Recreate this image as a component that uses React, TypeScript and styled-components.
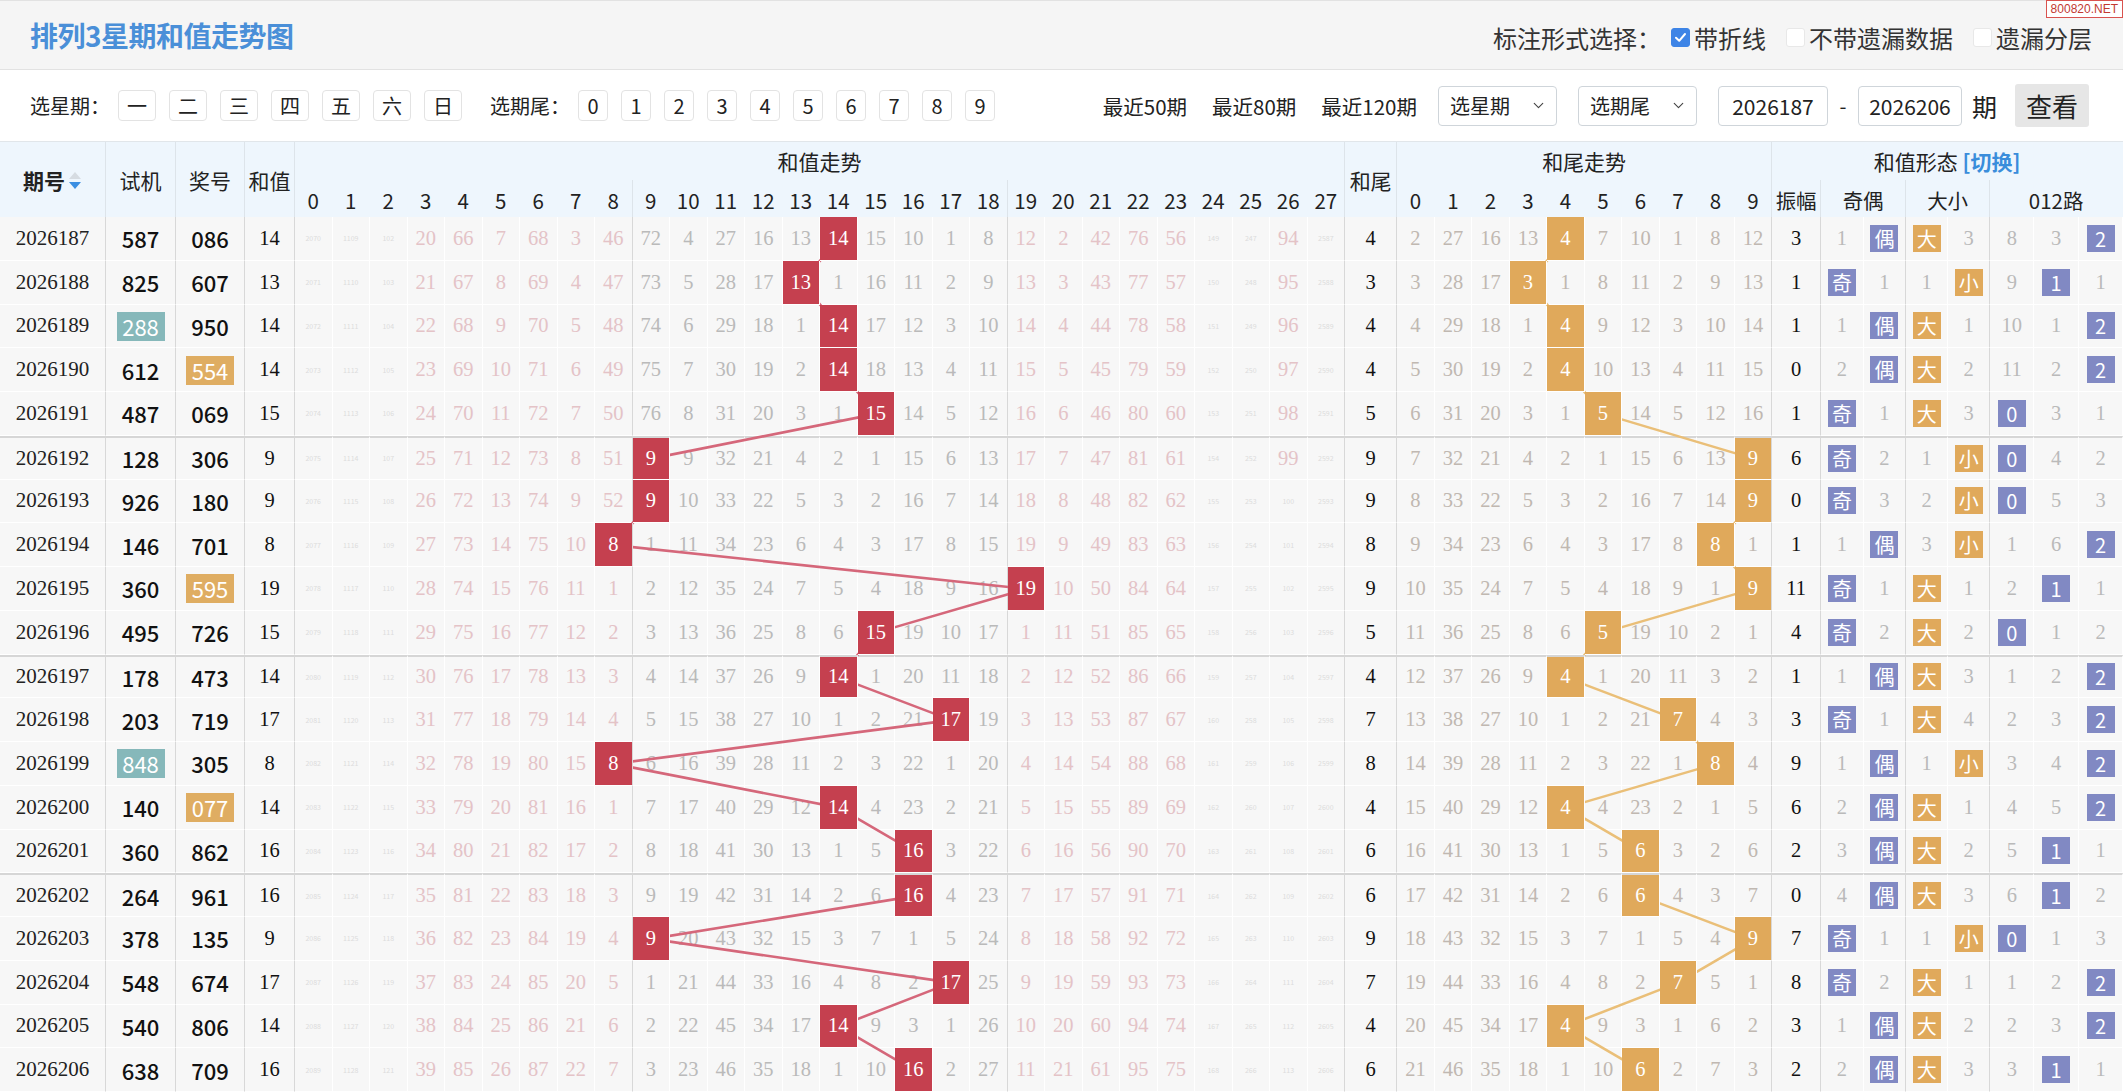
import * as React from 'react';
import styled, { createGlobalStyle } from 'styled-components';
import { ChevronDown } from 'lucide-react';

const SANS = `"Noto Sans CJK SC", "Noto Sans", sans-serif`;
const SERIF = `"Liberation Serif", "Noto Sans CJK SC", serif`;

const GlobalStyle = createGlobalStyle`
  html, body {
    margin: 0;
    padding: 0;
    background: #fff;
  }
  body {
    font-family: ${SANS};
    color: #222;
  }
`;

// ---- data ----
const DRAWS: [string, string, string][] = [
  ['2026187', '587', '086'],
  ['2026188', '825', '607'],
  ['2026189', '288', '950'],
  ['2026190', '612', '554'],
  ['2026191', '487', '069'],
  ['2026192', '128', '306'],
  ['2026193', '926', '180'],
  ['2026194', '146', '701'],
  ['2026195', '360', '595'],
  ['2026196', '495', '726'],
  ['2026197', '178', '473'],
  ['2026198', '203', '719'],
  ['2026199', '848', '305'],
  ['2026200', '140', '077'],
  ['2026201', '360', '862'],
  ['2026202', '264', '961'],
  ['2026203', '378', '135'],
  ['2026204', '548', '674'],
  ['2026205', '540', '806'],
  ['2026206', '638', '709'],
];

// first row omissions (hit column ignored)
const TREND0 = [2070, 1109, 102, 20, 66, 7, 68, 3, 46, 72, 4, 27, 16, 13, 0, 15, 10, 1, 8, 12, 2, 42, 76, 56, 149, 247, 94, 2587];
const TAIL0 = [2, 27, 16, 13, 0, 7, 10, 1, 8, 12];

interface Row {
  issue: string;
  test: string;
  draw: string;
  sum: number;
  tail: number;
  trend: number[];
  tails: number[];
  amp: number;
  odd: number;
  even: number;
  big: number;
  small: number;
  road: number[];
}

const hasPair = (s: string) => new Set(s.split('')).size < 3;

const buildRows = (): Row[] => {
  let trendMiss = TREND0.map((v) => v - 1);
  let tailMiss = TAIL0.map((v) => v - 1);
  let prevSum = 11;
  let oddMiss = 0;
  let evenMiss = 0;
  let bigMiss = 0;
  let smallMiss = 2;
  let roadMiss = [7, 2, 0];
  return DRAWS.map(([issue, test, draw]) => {
    const sum = draw.split('').reduce((a, d) => a + Number(d), 0);
    const tail = sum % 10;
    const trend = trendMiss.map((m, c) => (c === sum ? 0 : m + 1));
    const tails = tailMiss.map((m, c) => (c === tail ? 0 : m + 1));
    trendMiss = trend;
    tailMiss = tails;
    const amp = Math.abs(sum - prevSum);
    prevSum = sum;
    oddMiss = sum % 2 === 1 ? 0 : oddMiss + 1;
    evenMiss = sum % 2 === 0 ? 0 : evenMiss + 1;
    bigMiss = sum >= 14 ? 0 : bigMiss + 1;
    smallMiss = sum < 14 ? 0 : smallMiss + 1;
    roadMiss = roadMiss.map((m, k) => (sum % 3 === k ? 0 : m + 1));
    return {
      issue, test, draw, sum, tail, trend, tails, amp,
      odd: oddMiss, even: evenMiss, big: bigMiss, small: smallMiss, road: roadMiss,
    };
  });
};

const ROWS = buildRows();

const WIDTHS: number[] = [
  106, 70, 69, 50,
  ...Array(28).fill(37.5),
  52,
  ...Array(10).fill(37.5),
  49, 42.5, 42.5, 42, 42, 44.33, 44.33, 44.34,
];
const OFFSETS = WIDTHS.map((_, i) => WIDTHS.slice(0, i).reduce((a, w) => a + w, 0));
const HEAD_H = 75;
const ROW_H = 43.75;
const colCenter = (i: number) => OFFSETS[i] + WIDTHS[i] / 2;
const rowCenter = (r: number) => HEAD_H + ROW_H * r + ROW_H / 2 + (r > 0 && r % 5 === 0 ? 1 : 0);

// ---- page chrome ----
const Page = styled.div`
  position: relative;
  width: 2123px;
`;

const Watermark = styled.div`
  position: absolute;
  top: 0;
  right: 0;
  padding: 1px 4px;
  border: 1px solid #d9534f;
  background: #fff;
  color: #c23a32;
  font: 12px "Liberation Sans", sans-serif;
  z-index: 5;
`;

const TopBar = styled.header`
  height: 70px;
  box-sizing: border-box;
  display: flex;
  align-items: center;
  justify-content: space-between;
  padding: 0 31px 0 30px;
  background: #f5f5f5;
  border-top: 1px solid #e2e2e2;
  border-bottom: 1px solid #e2e2e2;
`;

const Title = styled.h1`
  margin: 0;
  font-size: 28px;
  font-weight: 700;
  color: #4a8fd8;
  letter-spacing: -0.5px;
`;

const Marks = styled.div`
  display: flex;
  align-items: center;
  font-size: 24px;
  color: #333;
  padding-top: 4px;
`;

const MarkOption = styled.label`
  display: flex;
  align-items: center;
  gap: 4px;
  margin-left: 20px;
  &:first-of-type {
    margin-left: 10px;
  }
`;

const Check = styled.span<{ $on?: boolean }>`
  width: 19px;
  height: 19px;
  box-sizing: border-box;
  border-radius: 3px;
  display: inline-flex;
  align-items: center;
  justify-content: center;
  background: ${(p) => (p.$on ? '#3d84e6' : '#fff')};
  border: 1px solid ${(p) => (p.$on ? '#3d84e6' : '#e8e8e8')};
`;

const FilterBar = styled.div`
  height: 72px;
  box-sizing: border-box;
  display: flex;
  align-items: center;
  justify-content: space-between;
  padding: 0 34px 0 30px;
  background: #fff;
  border-bottom: 1px solid #e1e6ea;
`;

const FilterGroup = styled.div`
  display: flex;
  align-items: center;
`;

const FilterLabel = styled.span`
  font-size: 20px;
  color: #222;
  margin-right: 8px;
  & + & {
    margin-left: 0;
  }
`;

const PickList = styled.div<{ $gap: number }>`
  display: flex;
  gap: ${(p) => p.$gap}px;
  margin-right: 28px;
`;

const PickButton = styled.span<{ $w: number }>`
  width: ${(p) => p.$w}px;
  height: 31px;
  box-sizing: border-box;
  display: inline-flex;
  align-items: center;
  justify-content: center;
  border: 1px solid #e3e3e3;
  border-radius: 4px;
  background: #fff;
  font-size: 20px;
  color: #222;
`;

const QuickLinks = styled.div`
  display: flex;
  gap: 25px;
  margin-right: 21px;
  font-size: 20.5px;
  color: #222;
`;

const Select = styled.div`
  width: 119px;
  height: 40px;
  box-sizing: border-box;
  display: flex;
  align-items: center;
  justify-content: space-between;
  padding: 0 9px 0 11px;
  margin-right: 21px;
  border: 1px solid #cfd5da;
  border-radius: 4px;
  background: #fff;
  font-size: 20px;
  color: #222;
`;

const IssueInput = styled.div<{ $w: number }>`
  width: ${(p) => p.$w}px;
  height: 40px;
  box-sizing: border-box;
  display: flex;
  align-items: center;
  justify-content: center;
  border: 1px solid #cfd5da;
  border-radius: 4px;
  background: #fff;
  font-size: 21px;
  color: #222;
`;

const Dash = styled.span`
  width: 30px;
  text-align: center;
  font-size: 20px;
`;

const Period = styled.span`
  font-size: 25px;
  padding: 0 18px 0 10px;
`;

const ViewButton = styled.span`
  width: 74px;
  height: 43px;
  display: inline-flex;
  align-items: center;
  justify-content: center;
  border-radius: 3px;
  background: #e6e6e6;
  font-size: 26px;
  color: #222;
`;

// ---- table ----
const TableWrap = styled.div`
  position: relative;
`;

const Table = styled.table`
  width: 2123px;
  table-layout: fixed;
  border-collapse: separate;
  border-spacing: 0;
`;

const Col = styled.col<{ $w: number }>`
  width: ${(p) => p.$w}px;
`;

const HeadRow = styled.tr<{ $h: number }>`
  height: ${(p) => p.$h}px;
`;

const Th = styled.th<{ $div?: boolean; $bold?: boolean }>`
  padding: 0;
  box-sizing: border-box;
  background: #eef6fd;
  font-size: 21px;
  font-weight: ${(p) => (p.$bold ? 700 : 400)};
  color: #222;
  text-align: center;
  vertical-align: middle;
  white-space: nowrap;
  border-right: 1px solid ${(p) => (p.$div ? '#dde4ea' : 'transparent')};
`;

const NumTh = styled(Th)`
  font-size: 20.5px;
  padding-top: 2px;
`;

const SortMark = styled.svg`
  vertical-align: middle;
  margin-left: 3px;
  margin-top: -3px;
`;

const SwitchLink = styled.span`
  color: #3a8ddb;
  font-weight: 700;
`;

const Td = styled.td<{ $sep?: boolean; $div?: boolean }>`
  height: ${ROW_H}px;
  padding: 0;
  box-sizing: border-box;
  background: #f7f7f7;
  text-align: center;
  vertical-align: middle;
  white-space: nowrap;
  overflow: hidden;
  border-bottom: 1px solid #fff;
  border-right: 1px solid ${(p) => (p.$div ? '#d8d8d8' : '#fff')};
  border-top: ${(p) => (p.$sep ? '2px solid #d6d6d6' : '0')};
`;

const IssueTd = styled(Td)`
  font-family: ${SERIF};
  font-size: 21px;
  color: #222;
`;

const DrawTd = styled(Td)`
  font-size: 22px;
  font-weight: 500;
  color: #111;
`;

const PairMark = styled.span<{ $color?: string }>`
  display: inline-block;
  min-width: 48px;
  line-height: 29px;
  background: ${(p) => p.$color ?? 'transparent'};
  color: ${(p) => (p.$color ? '#fff' : 'inherit')};
  font-weight: ${(p) => (p.$color ? 400 : 500)};
`;

const ValueTd = styled(Td)`
  font-family: ${SERIF};
  font-size: 20.5px;
  color: #111;
`;

const MissTd = styled(Td)<{ $tone: string; $tiny?: boolean }>`
  font-family: ${(p) => (p.$tiny ? SANS : SERIF)};
  font-size: ${(p) => (p.$tiny ? '7px' : '20.5px')};
  color: ${(p) => (p.$tiny ? '#dcdcdc' : p.$tone)};
`;

const HitTd = styled(Td)<{ $bg: string }>`
  position: relative;
  z-index: 2;
  background: ${(p) => p.$bg};
  color: #fff;
  font-family: ${SERIF};
  font-size: 20.5px;
`;

const Badge = styled.span<{ $bg: string }>`
  display: inline-flex;
  align-items: center;
  justify-content: center;
  width: 28px;
  height: 27px;
  background: ${(p) => p.$bg};
  color: #fff;
  font-family: ${SANS};
  font-size: 20px;
`;

const Lines = styled.svg`
  position: absolute;
  left: 0;
  top: 0;
  z-index: 1;
  pointer-events: none;
`;

const RED = '#c5404f';
const GOLD = '#e0a95b';
const PURPLE = '#8189c3';
const PINK_TXT = '#e4c3c7';
const GREY_TXT = '#bababa';
const TAIL_TXT = '#c0b8b1';

const SortIcon = () => (
  <SortMark width="14" height="22" viewBox="0 0 14 22">
    <path d="M7 2 L13 9 L1 9 Z" fill="#d6dce2" />
    <path d="M1 12 L13 12 L7 19 Z" fill="#3b8fe2" />
  </SortMark>
);

const TickIcon = () => (
  <svg width="13" height="13" viewBox="0 0 13 13">
    <path d="M2 6.8 L5.2 9.8 L11 3" fill="none" stroke="#fff" strokeWidth="2" strokeLinecap="round" strokeLinejoin="round" />
  </svg>
);

const MissCell = ({ value, tone, sep, div }: { value: number; tone: string; sep: boolean; div?: boolean }) => (
  <MissTd $tone={tone} $tiny={value >= 100} $sep={sep} $div={div}>
    {value}
  </MissTd>
);

const DataRow = ({ row, index }: { row: Row; index: number }) => {
  const sep = index > 0 && index % 5 === 0;
  const isOdd = row.sum % 2 === 1;
  const isBig = row.sum >= 14;
  const roadHit = row.sum % 3;
  return (
    <tr>
      <IssueTd $sep={sep} $div>{row.issue}</IssueTd>
      <DrawTd $sep={sep} $div>
        <PairMark $color={hasPair(row.test) ? '#86b8ba' : undefined}>{row.test}</PairMark>
      </DrawTd>
      <DrawTd $sep={sep} $div>
        <PairMark $color={hasPair(row.draw) ? '#dfad62' : undefined}>{row.draw}</PairMark>
      </DrawTd>
      <ValueTd $sep={sep} $div>{row.sum}</ValueTd>
      {row.trend.map((v, c) => {
        const div = c === 8 || c === 18 || c === 27;
        if (c === row.sum) {
          return (
            <HitTd key={c} $bg={RED} $sep={sep} $div={div}>
              {c}
            </HitTd>
          );
        }
        const tone = c >= 9 && c <= 18 ? GREY_TXT : PINK_TXT;
        return <MissCell key={c} value={v} tone={tone} sep={sep} div={div} />;
      })}
      <ValueTd $sep={sep} $div>{row.tail}</ValueTd>
      {row.tails.map((v, c) =>
        c === row.tail ? (
          <HitTd key={c} $bg={GOLD} $sep={sep} $div={c === 9}>
            {c}
          </HitTd>
        ) : (
          <MissCell key={c} value={v} tone={TAIL_TXT} sep={sep} div={c === 9} />
        ),
      )}
      <ValueTd $sep={sep} $div>{row.amp}</ValueTd>
      {isOdd ? (
        <ValueTd $sep={sep}><Badge $bg={PURPLE}>奇</Badge></ValueTd>
      ) : (
        <MissCell value={row.odd} tone={GREY_TXT} sep={sep} />
      )}
      {!isOdd ? (
        <ValueTd $sep={sep} $div><Badge $bg={PURPLE}>偶</Badge></ValueTd>
      ) : (
        <MissCell value={row.even} tone={GREY_TXT} sep={sep} div />
      )}
      {isBig ? (
        <ValueTd $sep={sep}><Badge $bg={GOLD}>大</Badge></ValueTd>
      ) : (
        <MissCell value={row.big} tone={GREY_TXT} sep={sep} />
      )}
      {!isBig ? (
        <ValueTd $sep={sep} $div><Badge $bg={GOLD}>小</Badge></ValueTd>
      ) : (
        <MissCell value={row.small} tone={GREY_TXT} sep={sep} div />
      )}
      {row.road.map((v, k) =>
        k === roadHit ? (
          <ValueTd key={k} $sep={sep}><Badge $bg={PURPLE}>{k}</Badge></ValueTd>
        ) : (
          <MissCell key={k} value={v} tone={GREY_TXT} sep={sep} />
        ),
      )}
    </tr>
  );
};

const TrendTable = () => {
  const height = HEAD_H + ROW_H * ROWS.length + 4;
  const redPts = ROWS.map((r, i) => `${colCenter(4 + r.sum)},${rowCenter(i)}`).join(' ');
  const goldPts = ROWS.map((r, i) => `${colCenter(33 + r.tail)},${rowCenter(i)}`).join(' ');
  return (
    <TableWrap>
      <Table>
        <colgroup>
          {WIDTHS.map((w, i) => (
            <Col key={i} $w={w} />
          ))}
        </colgroup>
        <thead>
          <HeadRow $h={38}>
            <Th rowSpan={2} $div $bold>
              期号
              <SortIcon />
            </Th>
            <Th rowSpan={2} $div>试机</Th>
            <Th rowSpan={2} $div>奖号</Th>
            <Th rowSpan={2} $div>和值</Th>
            <Th colSpan={28} $div>和值走势</Th>
            <Th rowSpan={2} $div>和尾</Th>
            <Th colSpan={10} $div>和尾走势</Th>
            <Th colSpan={8}>
              和值形态 <SwitchLink>[切换]</SwitchLink>
            </Th>
          </HeadRow>
          <HeadRow $h={37}>
            {Array.from({ length: 28 }, (_, c) => (
              <NumTh key={c} $div={c === 8 || c === 18 || c === 27}>
                {c}
              </NumTh>
            ))}
            {Array.from({ length: 10 }, (_, c) => (
              <NumTh key={`t${c}`} $div={c === 9}>
                {c}
              </NumTh>
            ))}
            <NumTh $div>振幅</NumTh>
            <NumTh colSpan={2} $div>奇偶</NumTh>
            <NumTh colSpan={2} $div>大小</NumTh>
            <NumTh colSpan={3}>012路</NumTh>
          </HeadRow>
        </thead>
        <tbody>
          {ROWS.map((row, i) => (
            <DataRow key={row.issue} row={row} index={i} />
          ))}
        </tbody>
      </Table>
      <Lines width={2123} height={height} viewBox={`0 0 2123 ${height}`}>
        <polyline points={redPts} fill="none" stroke="#d5677a" strokeWidth={2.6} strokeLinejoin="round" />
        <polyline points={goldPts} fill="none" stroke="#eabf78" strokeWidth={2.6} strokeLinejoin="round" />
      </Lines>
    </TableWrap>
  );
};

export default function App() {
  return (
    <Page>
      <GlobalStyle />
      <Watermark>800820.NET</Watermark>
      <TopBar>
        <Title>排列3星期和值走势图</Title>
        <Marks>
          <span>标注形式选择：</span>
          <MarkOption>
            <Check $on>
              <TickIcon />
            </Check>
            带折线
          </MarkOption>
          <MarkOption>
            <Check />
            不带遗漏数据
          </MarkOption>
          <MarkOption>
            <Check />
            遗漏分层
          </MarkOption>
        </Marks>
      </TopBar>
      <FilterBar>
        <FilterGroup>
          <FilterLabel>选星期：</FilterLabel>
          <PickList $gap={13}>
            {['一', '二', '三', '四', '五', '六', '日'].map((d) => (
              <PickButton key={d} $w={38}>
                {d}
              </PickButton>
            ))}
          </PickList>
          <FilterLabel>选期尾：</FilterLabel>
          <PickList $gap={13}>
            {Array.from({ length: 10 }, (_, d) => (
              <PickButton key={d} $w={30}>
                {d}
              </PickButton>
            ))}
          </PickList>
        </FilterGroup>
        <FilterGroup>
          <QuickLinks>
            <span>最近50期</span>
            <span>最近80期</span>
            <span>最近120期</span>
          </QuickLinks>
          <Select>
            选星期
            <ChevronDown size={17} strokeWidth={1.6} color="#444" />
          </Select>
          <Select>
            选期尾
            <ChevronDown size={17} strokeWidth={1.6} color="#444" />
          </Select>
          <IssueInput $w={110}>2026187</IssueInput>
          <Dash>-</Dash>
          <IssueInput $w={104}>2026206</IssueInput>
          <Period>期</Period>
          <ViewButton>查看</ViewButton>
        </FilterGroup>
      </FilterBar>
      <TrendTable />
    </Page>
  );
}
